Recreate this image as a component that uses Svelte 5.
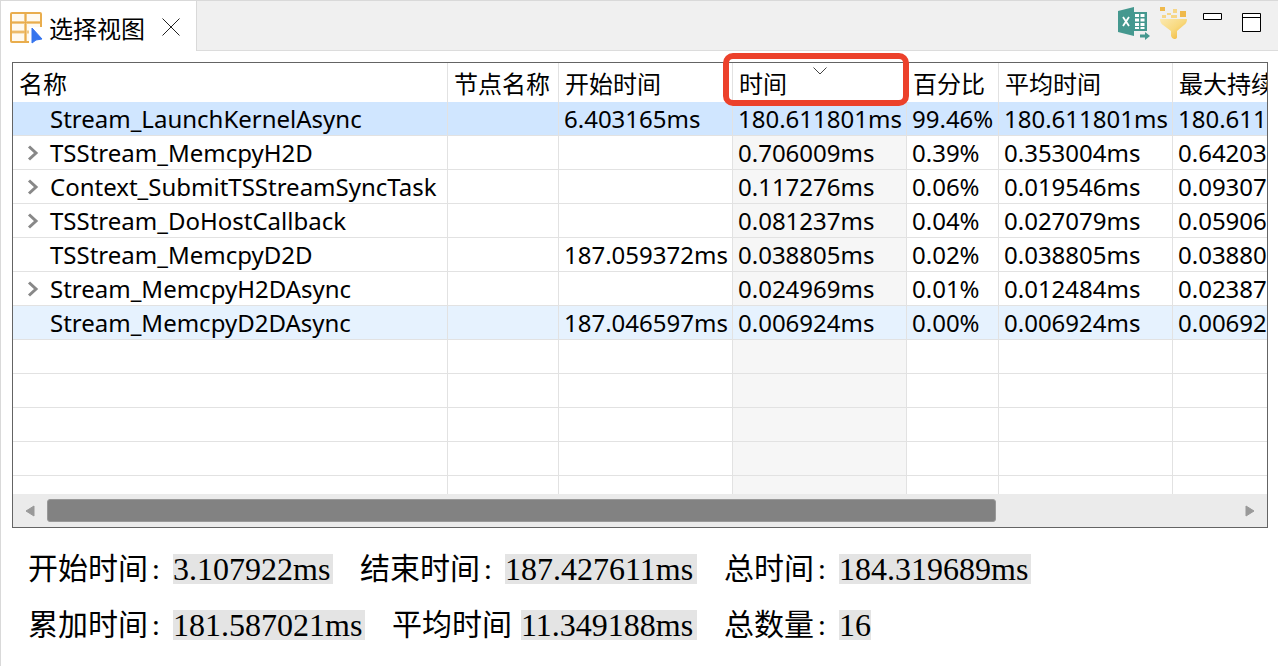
<script lang="ts">
    type Row = { name: string; expandable?: boolean; cells: string[] }

    const columns = [
        { key: 'name', title: '名称' },
        { key: 'node', title: '节点名称' },
        { key: 'start', title: '开始时间' },
        { key: 'time', title: '时间' },
        { key: 'percent', title: '百分比' },
        { key: 'avg', title: '平均时间' },
        { key: 'max', title: '最大持续' }
    ];

    const rows: Row[] = [
        { name: 'Stream_LaunchKernelAsync', cells: ['', '6.403165ms', '180.611801ms', '99.46%', '180.611801ms', '180.611'] },
        { name: 'TSStream_MemcpyH2D', expandable: true, cells: ['', '', '0.706009ms', '0.39%', '0.353004ms', '0.64203'] },
        { name: 'Context_SubmitTSStreamSyncTask', expandable: true, cells: ['', '', '0.117276ms', '0.06%', '0.019546ms', '0.09307'] },
        { name: 'TSStream_DoHostCallback', expandable: true, cells: ['', '', '0.081237ms', '0.04%', '0.027079ms', '0.05906'] },
        { name: 'TSStream_MemcpyD2D', cells: ['', '187.059372ms', '0.038805ms', '0.02%', '0.038805ms', '0.03880'] },
        { name: 'Stream_MemcpyH2DAsync', expandable: true, cells: ['', '', '0.024969ms', '0.01%', '0.012484ms', '0.02387'] },
        { name: 'Stream_MemcpyD2DAsync', cells: ['', '187.046597ms', '0.006924ms', '0.00%', '0.006924ms', '0.00692'] }
    ];

    const summary = [
        [
            { label: '开始时间', colon: true, value: '3.107922ms' },
            { label: '结束时间', colon: true, value: '187.427611ms' },
            { label: '总时间', colon: true, value: '184.319689ms' }
        ],
        [
            { label: '累加时间', colon: true, value: '181.587021ms' },
            { label: '平均时间', colon: false, value: '11.349188ms' },
            { label: '总数量', colon: true, value: '16' }
        ]
    ];

    let selected = $state(0);
    let hovered = $state(6);
</script>

<div class="view">
    <header class="tabbar">
        <div class="tab">
            <svg class="tab-icon" width="34" height="34" viewBox="0 0 34 34">
                <rect x="2" y="3" width="30" height="29" rx="1" fill="#fffaf0" />
                <path d="M3 12.500h28M3 22h28M16.500 4v27" fill="none" stroke="#f0c886" stroke-width="3" />
                <path d="M3 12.500h28M3 22h14M16.500 4v27" fill="none" stroke="#e9ad4d" stroke-width="1" />
                <rect x="2" y="3" width="30" height="29" rx="1" fill="none" stroke="#e9ad4d" stroke-width="2" />
                <path d="M20 17h14v17H20z" fill="#fff" />
                <path d="M23 18v15l4-3 6-1z" fill="#3574ee" stroke="#3574ee" stroke-linejoin="round" />
            </svg>
            <span>选择视图</span>
            <button class="close" aria-label="关闭">
                <svg width="18" height="18" viewBox="0 0 18 18"><path d="M.5.5l17 17M17.500.5l-17 17" stroke="#222" /></svg>
            </button>
        </div>
        <div class="tools">
            <button aria-label="导出 Excel">
                <svg width="34" height="34" viewBox="0 0 34 34">
                    <path d="M1 5l16-4v29L1 26z" fill="#45988f" />
                    <path d="M17 6h13v19H17z" fill="#45988f" />
                    <path d="M18 8h4v3h-4zM23.500 8h4v3h-4zM18 12.500h4v3h-4zM23.500 12.500h4v3h-4zM18 17h4v3h-4zM23.500 17h4v3h-4zM18 21h4v2h-4zM23.500 21h4v2h-4z" fill="#fff" />
                    <path d="M6 11l6 9M12 11l-6 9" stroke="#fff" stroke-width="1.800" />
                    <path d="M23 28.500h5V26l5 4-5 4v-2.500h-5z" fill="#45988f" />
                </svg>
            </button>
            <button aria-label="过滤">
                <svg width="30" height="34" viewBox="0 0 30 34">
                    <defs>
                        <linearGradient id="funnel" x1="0" y1="0" x2="1" y2="1">
                            <stop offset="0" stop-color="#fbe9b0" />
                            <stop offset=".5" stop-color="#f8d97e" />
                            <stop offset="1" stop-color="#f0b030" />
                        </linearGradient>
                    </defs>
                    <path d="M1 13h27q0 4-3 6l-7 6v6q0 2-3 2-2 0-3-3v-5l-8-6q-3-2-3-6z" fill="url(#funnel)" />
                    <path d="M1 1h5v4H1zM21 5h6v6h-6z" fill="#efb94c" />
                    <path d="M8 7h4v2H8zM14 3h4v4h-4zM3 9h4v3H3zM12 9h6v3h-6z" fill="#f6d688" />
                </svg>
            </button>
            <button aria-label="最小化">
                <svg width="19" height="34" viewBox="0 0 19 34"><path d="M.5 7.500h18v6H.5z" fill="#fff" stroke="#000" /></svg>
            </button>
            <button aria-label="最大化">
                <svg width="19" height="34" viewBox="0 0 19 34"><path d="M.5 7.500h18v18H.5zM.5 11.500h18" fill="#fff" stroke="#000" /></svg>
            </button>
        </div>
    </header>

    <main>
        <div class="grid">
            <div class="viewport">
                <table>
                    <colgroup>
                        {#each columns as col}
                            <col class="col-{col.key}" />
                        {/each}
                    </colgroup>
                    <thead>
                        <tr>
                            {#each columns as col}
                                <th class:sorted={col.key === 'time'}>
                                    {col.title}
                                    {#if col.key === 'time'}
                                        <svg class="sort" width="14" height="8" viewBox="0 0 14 8"><path d="M.5.5L7 7 13.500.5" fill="none" stroke="#444" /></svg>
                                    {/if}
                                </th>
                            {/each}
                        </tr>
                    </thead>
                    <tbody>
                        {#each rows as row, i}
                            <tr class:selected={selected === i} class:hovered={hovered === i} onclick={() => (selected = i)} onmouseenter={() => (hovered = i)}>
                                <td>
                                    <div class="name">
                                        {#if row.expandable}
                                            <button class="expander" aria-label="展开">
                                                <svg width="12" height="18" viewBox="0 0 12 18"><path d="M2 2.500L9 9l-7 6.500" fill="none" stroke="#888" stroke-width="3" /></svg>
                                            </button>
                                        {:else}
                                            <span class="expander"></span>
                                        {/if}
                                        {row.name}
                                    </div>
                                </td>
                                {#each row.cells as cell}
                                    <td>{cell}</td>
                                {/each}
                            </tr>
                        {/each}
                        {#each Array(5) as _}
                            <tr>
                                {#each columns as _col}
                                    <td></td>
                                {/each}
                            </tr>
                        {/each}
                    </tbody>
                </table>
            </div>
            <div class="scrollbar">
                <button aria-label="向左滚动">
                    <svg width="10" height="12" viewBox="0 0 10 12"><path d="M9 1v10L1 6z" fill="#999" stroke="#999" stroke-linejoin="round" /></svg>
                </button>
                <div class="track"><div class="thumb"></div></div>
                <button aria-label="向右滚动">
                    <svg width="10" height="12" viewBox="0 0 10 12"><path d="M1 1v10l8-5z" fill="#999" stroke="#999" stroke-linejoin="round" /></svg>
                </button>
            </div>
            <span class="highlight"></span>
        </div>

        <section class="summary">
            {#each summary as line}
                <div class="line">
                    {#each line as item}
                        <div class="item">
                            <span class="label">{item.label}{#if item.colon}<span class="colon">:</span>{/if}</span>
                            <output style="width: {item.value.length}ch">{item.value}</output>
                        </div>
                    {/each}
                </div>
            {/each}
        </section>
    </main>
</div>

<style>
    :global(body) {
        background: #fff;
    }

    .view {
        box-sizing: border-box;
        min-height: 100vh;
        border-left: 1px solid #d9d9d9;
        font-family: "Noto Sans", "Noto Sans CJK SC", sans-serif;
        font-size: 24px;
        color: #000;
    }

    button {
        display: flex;
        align-items: center;
        justify-content: center;
        padding: 0;
        border: 0;
        background: none;
    }

    .tabbar {
        display: flex;
        justify-content: space-between;
        height: 49px;
        border-top: 1px solid #d9d9d9;
        border-bottom: 1px solid #dcdcdc;
        background: #f0f0f0;
    }

    .tab {
        display: flex;
        align-items: center;
        box-sizing: border-box;
        height: 50px;
        padding: 2px 16px 0 8px;
        border-right: 1px solid #d9d9d9;
        background: #fff;
        white-space: nowrap;
    }

    .tab span {
        margin: 0 17px 0 6px;
    }

    .tools {
        display: flex;
        align-items: flex-start;
        gap: 8px;
        padding: 5px 17px 0 0;
    }

    .tools button:nth-child(3) {
        margin-left: 6px;
    }

    .tools button:nth-child(4) {
        margin-left: 12px;
    }

    main {
        padding: 11px 10px 0 11px;
    }

    .grid {
        position: relative;
        border: 1px solid #646464;
    }

    .viewport {
        height: 431px;
        overflow: hidden;
    }

    table {
        width: 100%;
        table-layout: fixed;
        border-collapse: separate;
        border-spacing: 0;
    }

    .col-name {
        width: 435px;
    }

    .col-node {
        width: 111px;
    }

    .col-start, .col-time, .col-avg {
        width: 174px;
    }

    .col-percent {
        width: 92px;
    }

    th, td {
        box-sizing: border-box;
        height: 34px;
        padding: 0 0 0 5px;
        border-right: 1px solid #e2e2e2;
        border-bottom: 1px solid #e2e2e2;
        text-align: left;
        font-weight: normal;
        line-height: 32px;
        white-space: nowrap;
    }

    th {
        height: 39px;
        padding: 3px 0 0 6px;
        border-bottom: 0;
    }

    th:last-child, td:last-child {
        border-right: 0;
    }

    td:nth-child(4) {
        background: #f6f6f6;
    }

    .hovered td {
        background: #e6f2fe;
    }

    .selected td {
        background: #d0e6ff;
    }

    .name {
        display: flex;
        align-items: center;
    }

    .expander {
        flex: none;
        width: 12px;
        margin: 0 11px 0 9px;
    }

    .sorted {
        position: relative;
    }

    .sort {
        position: absolute;
        top: 4px;
        left: calc(50% - 7px);
    }

    /* frames the header of the sorted column */
    .highlight {
        position: absolute;
        top: -10px;
        left: 710px;
        box-sizing: border-box;
        width: 186px;
        height: 53px;
        border: 6px solid #ec412b;
        border-radius: 10px;
        pointer-events: none;
    }

    .scrollbar {
        display: flex;
        align-items: center;
        height: 33px;
        background: #ebebeb;
    }

    .scrollbar button {
        width: 34px;
        height: 33px;
    }

    .track {
        flex: 1;
    }

    .thumb {
        box-sizing: border-box;
        width: 80%;
        height: 23px;
        border: 1px solid #999;
        border-radius: 3px;
        background: #828282;
    }

    .summary {
        display: flex;
        flex-direction: column;
        gap: 26px;
        padding: 26px 16px 0;
        font-family: "Liberation Serif", "Noto Sans CJK SC", serif;
    }

    .line {
        display: flex;
        gap: 27px;
    }

    .item {
        display: flex;
        align-items: center;
        gap: 9px;
        height: 30px;
        line-height: 30px;
        white-space: nowrap;
    }

    .label {
        font-size: 30px;
    }

    .colon {
        display: inline-block;
        width: 16px;
        text-align: center;
    }

    output {
        background: #e4e4e4;
        font-size: 32px;
    }
</style>
